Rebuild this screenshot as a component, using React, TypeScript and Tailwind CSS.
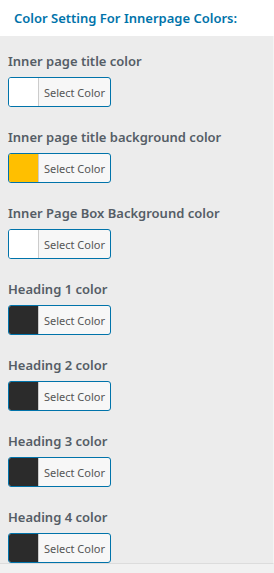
import React from "react";

const items = [
  { label: "Inner page title color", color: "#ffffff" },
  { label: "Inner page title background color", color: "#ffbf00" },
  { label: "Inner Page Box Background color", color: "#ffffff" },
  { label: "Heading 1 color", color: "#2b2b2b" },
  { label: "Heading 2 color", color: "#2b2b2b" },
  { label: "Heading 3 color", color: "#2b2b2b" },
  { label: "Heading 4 color", color: "#2b2b2b" },
];

export default function App() {
  return (
    <div className="w-[274px] h-[573px] bg-[#f1f1f1] overflow-hidden" style={{ fontFamily: '"Noto Sans", "Open Sans", sans-serif' }}>
      <div className="h-[36px] bg-white flex items-center pl-[14px]">
        <span className="text-[13px] font-semibold text-[#0073aa] leading-none">Color Setting For Innerpage Colors:</span>
      </div>
      <div className="bg-[#ececec] border-b border-[#dcdcdc] border-r border-r-[#f4f4f4] pt-[17px] pl-[8px] flex flex-col gap-[22px]">
        {items.map((it, i) => (
          <div key={i} className="flex flex-col shrink-0">
            <div className="h-[16px] flex items-center text-[13px] font-semibold text-[#555d66] leading-none">{it.label}</div>
            <div className="mt-[8px] w-[103px] h-[30px] border border-[#0073aa] rounded-[3px] flex overflow-hidden bg-[#f7f7f7]">
              <div className="w-[30px] h-full border-r border-[#cccccc]" style={{ backgroundColor: it.color }} />
              <div className="flex-1 flex items-center justify-center text-[11px] text-[#555555] leading-none">Select Color</div>
            </div>
          </div>
        ))}
      </div>
    </div>
  );
}
